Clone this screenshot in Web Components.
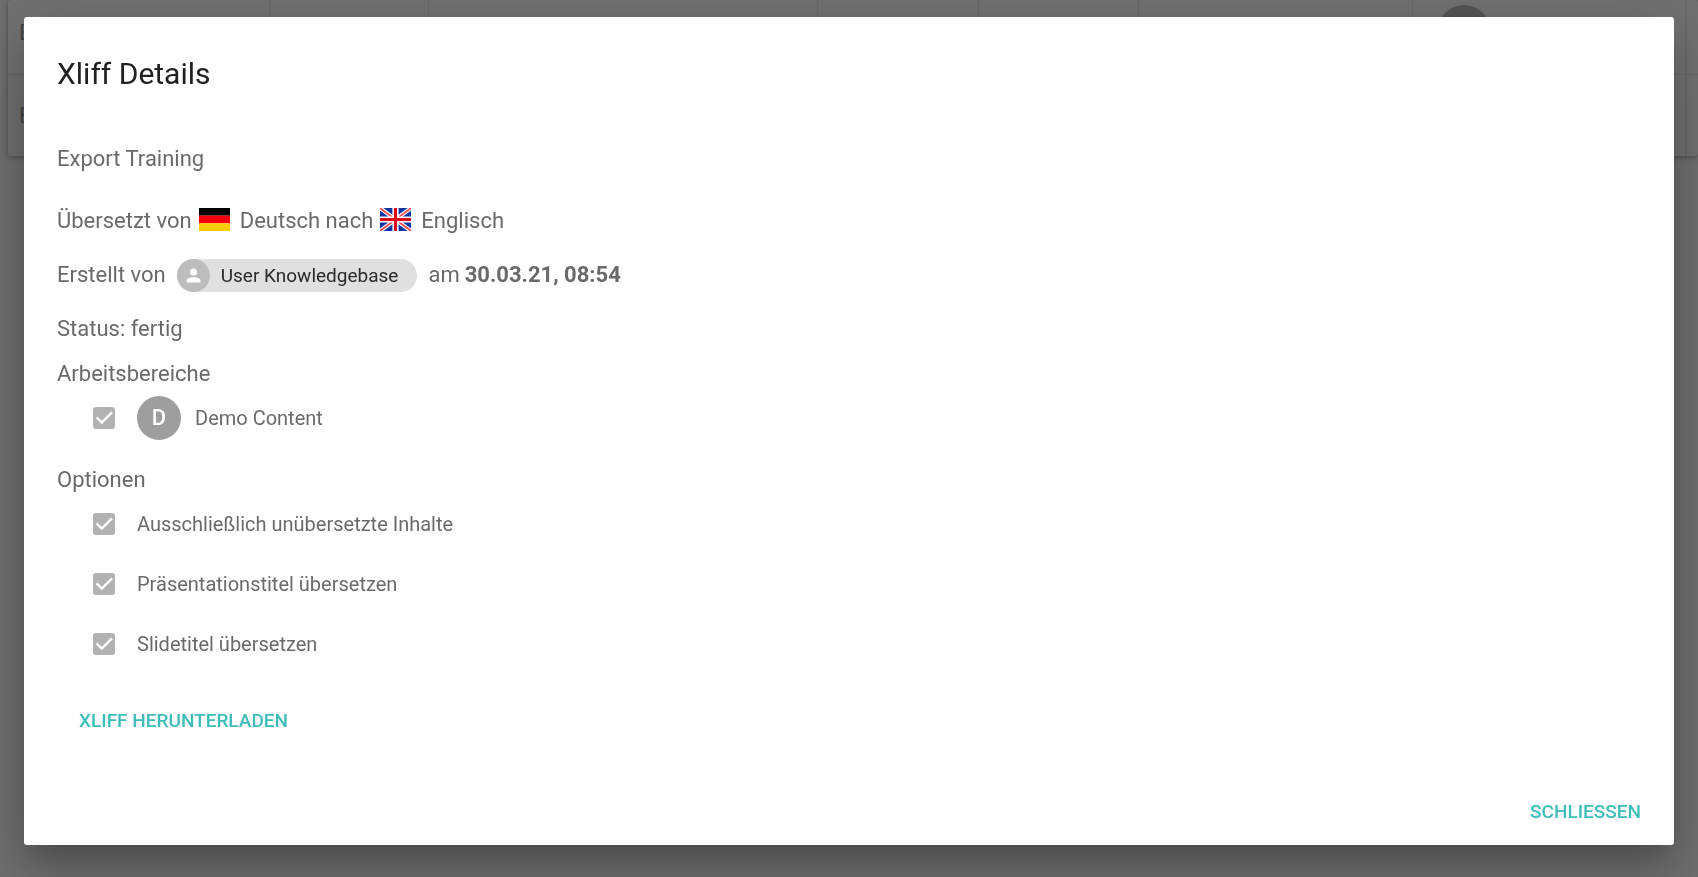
<!DOCTYPE html>
<html lang="de">
<head>
<meta charset="utf-8">
<title>Xliff Details</title>
<style>
html,body{margin:0;height:100%}
body{font-family:Roboto,"Noto Sans",sans-serif;background:#707070;color:#6a6a6a;overflow:hidden}
</style>
</head>
<body>
<export-page></export-page>
<script>
const define = (name, html, init) => customElements.define(name, class extends HTMLElement {
  constructor() {
    super();
    this.attachShadow({ mode: 'open' }).innerHTML = html;
  }
  connectedCallback() { if (init) init.call(this, this.shadowRoot); }
});

define('flag-icon', `
<style>:host{display:block;width:31px;height:23px}svg{display:block;width:100%;height:100%}</style>
<svg aria-hidden="true"></svg>`, function (root) {
  const svg = root.querySelector('svg');
  svg.setAttribute('preserveAspectRatio', 'none');
  if (this.getAttribute('country') === 'de') {
    svg.setAttribute('viewBox', '0 0 4 3');
    svg.innerHTML = '<path d="M0 0h4v1H0z"/><path fill="#f00" d="M0 1h4v1H0z"/><path fill="#fc0" d="M0 2h4v1H0z"/>';
  } else {
    svg.setAttribute('viewBox', '0 0 640 480');
    svg.innerHTML = '<path fill="#0a35a2" d="M0 0h640v480H0z"/><path stroke="#fff" stroke-width="84" d="m0 0 640 480M640 0 0 480"/><path fill="#ee4a50" d="m400 276 240 180v24h-26L372 300zM240 276l28 24L28 480H0v-24zM640 0v24L400 204l-28-24L612 0zM0 0h28l240 180-28 24L0 24z"/><path fill="#fff" d="M256 0v480h128V0zM0 176v128h640V176z"/><path fill="#dc0814" d="M0 208v64h640v-64zM288 0v480h64V0z"/>';
  }
});

define('user-chip', `
<style>
:host{display:flex;align-items:center;height:33px;border-radius:17px;background:#e0e0e0;color:#2a2a2a;font-size:19px;line-height:33px;padding-right:19px;margin:0 11px}
.avatar{width:33px;height:33px;border-radius:50%;background:#bdbdbd;display:grid;place-items:center;margin-right:11px}
svg{width:21px;height:21px;fill:#fff}
</style>
<span class="avatar"><svg viewBox="0 0 24 24" aria-hidden="true"><path d="M12 4a4 4 0 1 1 0 8 4 4 0 0 1 0-8m0 10c4.420 0 8 1.790 8 4v2H4v-2c0-2.210 3.580-4 8-4z"/></svg></span><slot></slot>`);

define('letter-avatar', `
<style>:host{display:grid;place-items:center;width:44px;height:44px;border-radius:50%;background:#9e9e9e;color:#fff;font-size:22px;font-weight:500;line-height:44px;margin-right:14px}</style>
<slot></slot>`);

define('option-check', `
<style>
:host{display:block}
label{display:flex;align-items:center;height:60px;padding-left:36px;font-size:20px;line-height:24px}
:host([compact]) label{height:44px}
.box{display:grid;width:22px;height:22px;margin-right:22px}
.box>*{grid-area:1/1;margin:0;width:22px;height:22px}
input{appearance:none;border-radius:3px;border:2px solid #b2b2b2;box-sizing:border-box}
input:checked{background:#b2b2b2}
svg{fill:none;stroke:#fff;stroke-width:2.400;pointer-events:none;visibility:hidden}
input:checked+svg{visibility:visible}
</style>
<label><span class="box"><input type="checkbox" checked disabled><svg viewBox="0 0 22 22" aria-hidden="true"><path d="m3.600 10.400 5.200 5.200L19 5.400"/></svg></span><slot></slot></label>`);

define('flat-button', `
<style>
:host{display:inline-block}
button{font:500 19px/50px Roboto,"Noto Sans",sans-serif;color:#3fbdb9;background:none;border:0;border-radius:3px;padding:0 22px;margin:0;text-transform:uppercase;cursor:pointer;display:block}
:host([dense]) button{padding:0}
</style>
<button type="button"><slot></slot></button>`);

define('export-table', `
<style>
:host{display:block;padding-left:8px}
table{width:100%;border-collapse:collapse;table-layout:fixed;background:#727272;box-shadow:0 1px 5px #4a4a4a;border-radius:3px;font-size:22px;color:#474747}
td{height:82px;padding:0 0 0 11px;border-right:1px solid #696969;border-bottom:1px solid #676767;box-sizing:border-box}
tr:first-child td{height:74px;padding-bottom:8px}
tr:last-child td{border-bottom:0}
td:last-child{border-right:0}
td:first-child,td:nth-child(7){border-right-width:2px}
i{display:block;width:54px;height:54px;border-radius:50%;background:#545454;margin:-2px 0 0 13px}
</style>
<table aria-hidden="true">
<colgroup><col style="width:15.500%"><col style="width:9.400%"><col style="width:23.000%"><col style="width:9.520%"><col style="width:9.470%"><col style="width:16.210%"><col style="width:16.170%"><col></colgroup>
<tr><td>E</td><td></td><td></td><td></td><td></td><td></td><td><i></i></td><td></td></tr>
<tr><td>E</td><td></td><td></td><td></td><td></td><td></td><td></td><td></td></tr>
</table>`);

define('modal-dialog', `
<style>
:host{position:fixed;inset:0;display:block;padding:17px 24px}
section{background:#fff;border-radius:3px;padding:0 33px 8px;box-shadow:0 15px 21px -10px rgba(0,0,0,.2),0 33px 52px 4px rgba(0,0,0,.14),0 12px 63px 11px rgba(0,0,0,.12)}
h1{margin:0;padding:35px 0 46px;font-size:30px;line-height:44px;font-weight:400;color:#212121}
footer{display:flex;justify-content:flex-end;padding-top:41px}
</style>
<section role="dialog" aria-modal="true" aria-labelledby="t"><h1 id="t"><slot name="title"></slot></h1><slot></slot><footer><slot name="actions"></slot></footer></section>`);

define('xliff-details', `
<style>
:host{display:block;font-size:22px;line-height:32px;color:#6a6a6a}
p{margin:0}
h2{margin:0;font:inherit;line-height:28px}
.export{padding:1px 0 19px}
.meta{display:flex;align-items:center;height:54px}
.areas{padding:4px 0 26px}
.areas h2{padding-bottom:8px}
strong{font-weight:700;margin-left:5px}
.download{padding-top:22px}
flag-icon{margin:0 10px 3px 7px}
</style>
<p class="export">Export Training</p>
<p class="meta">Übersetzt von<flag-icon country="de"></flag-icon>Deutsch nach<flag-icon country="gb"></flag-icon>Englisch</p>
<p class="meta">Erstellt von<user-chip>User Knowledgebase</user-chip>am <strong>30.03.21, 08:54</strong></p>
<p class="meta">Status: fertig</p>
<div class="areas"><h2>Arbeitsbereiche</h2>
<option-check compact><letter-avatar>D</letter-avatar>Demo Content</option-check></div>
<h2>Optionen</h2>
<option-check>Ausschließlich unübersetzte Inhalte</option-check>
<option-check>Präsentationstitel übersetzen</option-check>
<option-check>Slidetitel übersetzen</option-check>
<div class="download"><flat-button>Xliff herunterladen</flat-button></div>`);

define('export-page', `
<style>:host{display:block}</style>
<export-table></export-table>
<modal-dialog><span slot="title">Xliff Details</span><xliff-details></xliff-details><flat-button dense slot="actions">Schliessen</flat-button></modal-dialog>`);
</script>
</body>
</html>
